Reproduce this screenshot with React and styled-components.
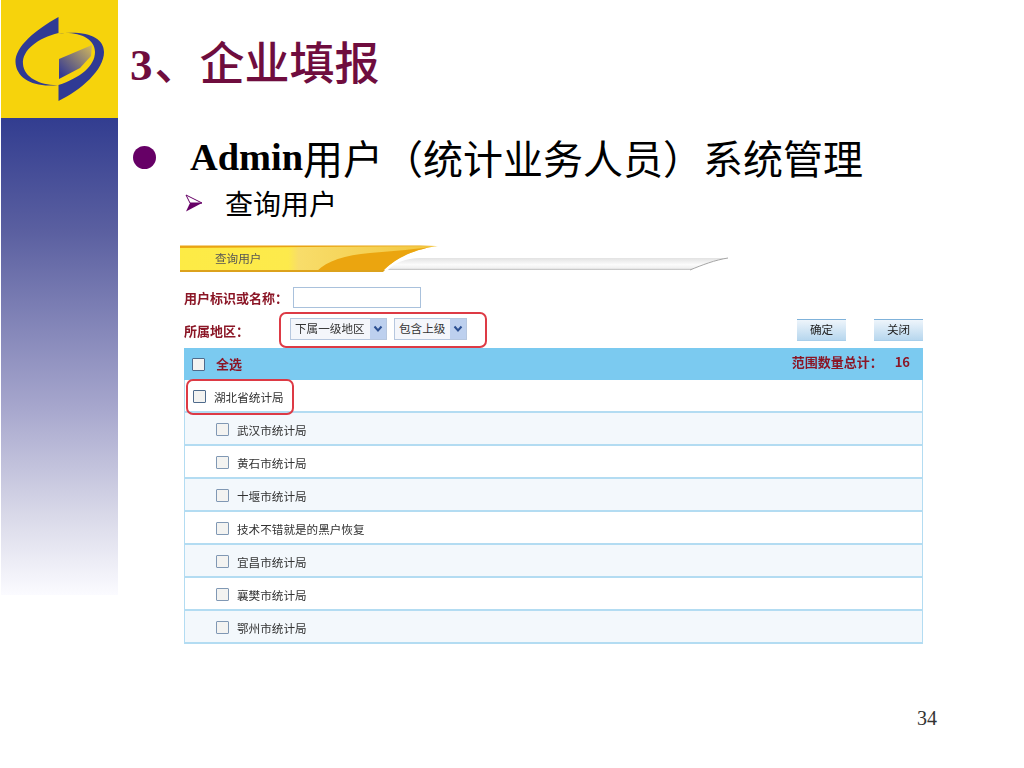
import React from 'react'
import styled, { createGlobalStyle } from 'styled-components'

const CJK = `"Liberation Serif", "Noto Sans CJK SC", serif`
const UI = `"Noto Sans CJK SC", "Liberation Sans", sans-serif`

const Global = createGlobalStyle`
html,body{margin:0;padding:0;background:#fff;}
`

const Slide = styled.div`
width:1024px;
height:768px;
display:flex;
overflow:hidden;
font-family:${CJK};
`
const Sidebar = styled.div`
width:117px;
height:595px;
margin-left:1px;
flex:none;
display:flex;
flex-direction:column;
`
const LogoBox = styled.div`
height:118px;
flex:none;
background:#f6d30c;
svg{display:block;}
`
const Fade = styled.div`
flex:1;
background:linear-gradient(#323d90 0%,#5a5fa0 23.5%,#a5a5cc 60%,#d8d8e8 83%,#fbfbff 100%);
`
const Main = styled.div`
flex:1;
display:flex;
flex-direction:column;
padding:39px 0 0 12px;
`
const Title = styled.h1`
margin:0;
font-size:45px;
line-height:52px;
font-weight:500;
color:#6f0d3e;
white-space:nowrap;
b{font-weight:700;margin-right:2px;}
`
const BulletRow = styled.div`
margin-top:43px;
height:46px;
display:flex;
align-items:center;
font-size:40px;
color:#000;
white-space:nowrap;
b{font-weight:700;font-size:38.4px;}
`
const Dot = styled.span`
width:23px;
height:23px;
border-radius:50%;
background:#660066;
margin:0 34px 0 3px;
flex:none;
`
const SubRow = styled.div`
margin-top:6px;
height:34px;
padding-left:55px;
display:flex;
align-items:center;
font-size:28px;
color:#000;
white-space:nowrap;
svg{margin-right:22px;flex:none;}
`
const Panel = styled.div`
margin:25px 0 0 50px;
width:745px;
filter:blur(0.5px);
font-family:${UI};
`
const Banner = styled.div`
position:relative;
height:30px;
svg{display:block;}
`
const TabLabel = styled.span`
position:absolute;
left:35px;
top:5px;
font-size:11.6px;
line-height:17px;
color:#555;
`
const Form = styled.div`
padding:12px 2px 0 4px;
`
const InputRow = styled.div`
display:flex;
align-items:center;
height:21px;
`
const Label = styled.span`
font-size:13px;
font-weight:700;
color:#8b1626;
white-space:nowrap;
width:${p=>p.$w}px;
flex:none;
`
const TextInput = styled.div`
width:126px;
height:19px;
border:1px solid #a9c1dc;
background:#fff;
`
const FilterRow = styled.div`
display:flex;
align-items:center;
height:36px;
margin-top:4px;
`
const Highlight = styled.div`
display:flex;
align-items:center;
box-sizing:border-box;
border:2px solid #dd3a45;
border-radius:7px;
`
const SelectWrap = styled(Highlight)`
width:208px;
height:36px;
gap:7px;
padding:0 0 2px 9px;
`
const Select = styled.div`
box-sizing:border-box;
width:${p=>p.$w}px;
height:22px;
display:flex;
align-items:center;
justify-content:space-between;
padding:0 0 0 4px;
border:1px solid #b6c7df;
background:#f4f6fb;
font-size:11.6px;
color:#333;
white-space:nowrap;
`
const SelectText = styled.span`
margin-top:-3px;
`
const Arrow = styled.span`
width:16px;
height:20px;
background:#bdd0ee;
display:flex;
align-items:center;
justify-content:center;
`
const Actions = styled.div`
margin-left:auto;
display:flex;
gap:28px;
`
const ActionButton = styled.div`
box-sizing:border-box;
width:49px;
height:22px;
padding-bottom:2px;
border-top:1px solid #7fb2da;
border-bottom:1px solid #a9cfeb;
background:linear-gradient(#eef5fb,#b7d7ee);
display:flex;
align-items:center;
justify-content:center;
font-size:11.6px;
color:#222;
`
const HeadRow = styled.div`
height:32px;
display:flex;
align-items:center;
padding:0 13px 0 8px;
background:#7bcaf0;
`
const Check = styled.span`
box-sizing:border-box;
width:13px;
height:13px;
flex:none;
border:1.5px solid ${p=>p.$dark?'#4f6b8c':'#8098b4'};
background:#f3f3f1;
border-radius:1px;
`
const HeadText = styled.span`
font-size:13px;
font-weight:700;
color:#8b1626;
padding-bottom:2px;
margin-left:${p=>p.$gap||0}px;
`
const Total = styled(HeadText)`
margin-left:auto;
padding-bottom:6px;
white-space:pre;
`
const Row = styled.div`
box-sizing:border-box;
height:33px;
display:flex;
align-items:center;
padding:2px 0 0 ${p=>p.$indent?31:6}px;
background:${p=>p.$tinted?'#f3f8fc':'#fff'};
border-left:1px solid #b3dcf2;
border-right:1px solid #b3dcf2;
border-bottom:2px solid #b3dcf2;
`
const RowName = styled.span`
font-size:11.6px;
color:#333;
margin-left:${p=>p.$gap}px;
white-space:nowrap;
`
const RowMark = styled(Highlight)`
height:36px;
width:108px;
margin:0 0 0 -5px;
padding-left:5px;
`
const PageNo = styled.div`
margin:auto 87px 39px auto;
font-size:20px;
line-height:22px;
color:#333;
`

const cities = ['武汉市统计局','黄石市统计局','十堰市统计局','技术不错就是的黑户恢复','宜昌市统计局','襄樊市统计局','鄂州市统计局']

const Logo = () => (
  <svg width="117" height="118" viewBox="0 0 117 118">
    <defs>
      <linearGradient id="centre" x1="0" y1="1" x2="1" y2="0">
        <stop offset="0.1" stopColor="#363b92"/>
        <stop offset="1" stopColor="#d3b85c"/>
      </linearGradient>
    </defs>
    <path fill="#2f3a94" d="M57.5 17C34 30 14 47 14.5 62C15 78 32 88 57 85C40 85.500 23 78 22 64C21 50 37 38 57.500 33Z"/>
    <path fill="#2f3a94" d="M57.500 101C80 90 103 70 103 52C103 38 87 30 57 33.500C77 31 94 38 94 52C94 66 79 78 57.500 85Z"/>
    <path fill="url(#centre)" d="M58 59L91 45L90 56L79 68L58 79Z"/>
  </svg>
)

const Swoosh = () => (
  <svg width="552" height="30" viewBox="0 0 552 30">
    <defs>
      <linearGradient id="tab" x1="0" y1="0" x2="1" y2="0">
        <stop offset="0" stopColor="#fdeb45"/>
        <stop offset="0.42" stopColor="#fdea4c"/>
        <stop offset="0.46" stopColor="#f8dd6a"/>
        <stop offset="1" stopColor="#f2c640"/>
      </linearGradient>
      <linearGradient id="rail" x1="0" y1="0" x2="0" y2="1">
        <stop offset="0" stopColor="#e2e2e2"/>
        <stop offset="0.55" stopColor="#fbfbfb"/>
        <stop offset="0.85" stopColor="#f0f0f0"/>
        <stop offset="1" stopColor="#b9b9b9"/>
      </linearGradient>
    </defs>
    <path fill="url(#rail)" d="M208 25C214 18 226 13 240 13L548 13C535 15 522 20 510 25Z"/>
    <path fill="none" stroke="#a5a5a5" d="M510 25C522 20 535 15 548 13"/>
    <path fill="url(#tab)" d="M0 1L258 1C230 5 214 15 203 26L0 26Z"/>
    <path fill="#eba50f" d="M137 26C147 16 165 10 190 8C215 6 240 4 258 1C230 5 214 15 203 26Z"/>
    <path fill="#e9a413" d="M0 0.500L240 0.500L258 1L0 3Z"/>
    <path fill="#dca21c" d="M0 25L205 25L203 27L0 27Z"/>
  </svg>
)

function Chevron(){
  return (
    <svg width="10" height="8" viewBox="0 0 10 8">
      <path d="M1.500 1.500L5 5.500L8.500 1.500" fill="none" stroke="#2b4f91" strokeWidth="2"/>
    </svg>
  )
}

const App = () => (
  <Slide>
    <Global/>
    <Sidebar>
      <LogoBox><Logo/></LogoBox>
      <Fade/>
    </Sidebar>
    <Main>
      <Title><b>3</b>、企业填报</Title>
      <BulletRow><Dot/><b>Admin</b>用户（统计业务人员）系统管理</BulletRow>
      <SubRow>
        <svg width="18" height="18" viewBox="0 0 18 18">
          <path fill="#fff" stroke="#660066" strokeWidth="1" d="M1 1L17 9L5 9Z"/>
          <path fill="#660066" d="M17 9L1 17.500L5 9Z"/>
        </svg>
        查询用户
      </SubRow>
      <Panel>
        <Banner>
          <Swoosh/>
          <TabLabel>查询用户</TabLabel>
        </Banner>
        <Form>
          <InputRow>
            <Label $w={109}>用户标识或名称：</Label>
            <TextInput/>
          </InputRow>
          <FilterRow>
            <Label $w={95}>所属地区：</Label>
            <SelectWrap>
              <Select $w={97}><SelectText>下属一级地区</SelectText><Arrow><Chevron/></Arrow></Select>
              <Select $w={73}><SelectText>包含上级</SelectText><Arrow><Chevron/></Arrow></Select>
            </SelectWrap>
            <Actions>
              <ActionButton>确定</ActionButton>
              <ActionButton>关闭</ActionButton>
            </Actions>
          </FilterRow>
          <HeadRow>
            <Check $dark/>
            <HeadText $gap={11}>全选</HeadText>
            <Total>范围数量总计：    16</Total>
          </HeadRow>
          <Row>
            <RowMark>
              <Check $dark/>
              <RowName $gap={8}>湖北省统计局</RowName>
            </RowMark>
          </Row>
          {cities.map((name,i)=>(
            <Row key={name} $indent $tinted={i%2===0}>
              <Check/>
              <RowName $gap={8}>{name}</RowName>
            </Row>
          ))}
        </Form>
      </Panel>
      <PageNo>34</PageNo>
    </Main>
  </Slide>
)

export default App;
